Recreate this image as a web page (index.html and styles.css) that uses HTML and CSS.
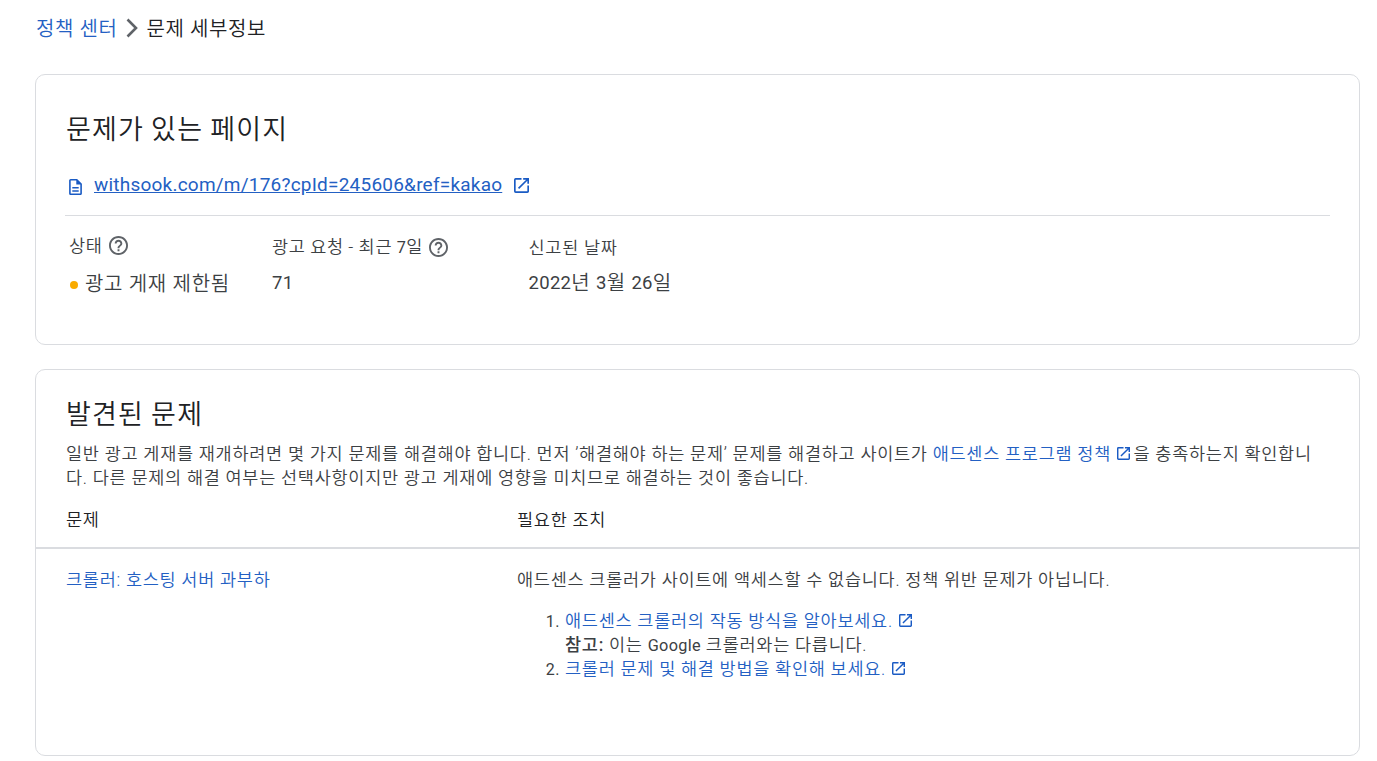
FILE: index.html
```html
<!DOCTYPE html>
<html lang="ko">
<head>
  <meta charset="UTF-8" />
  <meta name="viewport" content="width=device-width, initial-scale=1.0"/>
  <title>문제 세부정보</title>
  <link rel="stylesheet" href="styles.css">
</head>
<body>

  <svg width="0" height="0" class="defs">
    <symbol id="open" viewBox="3 3 18 18">
      <path d="M19 19H5V5h7V3H5a2 2 0 0 0-2 2v14a2 2 0 0 0 2 2h14c1.1 0 2-.9 2-2v-7h-2v7zM14 3v2h3.59l-9.83 9.83 1.41 1.41L19 6.41V10h2V3h-7z"/>
    </symbol>
    <symbol id="help" viewBox="2 2 20 20">
      <path d="M11 18h2v-2h-2v2zm1-16C6.48 2 2 6.48 2 12s4.48 10 10 10 10-4.48 10-10S17.52 2 12 2zm0 18c-4.41 0-8-3.59-8-8s3.59-8 8-8 8 3.59 8 8-3.59 8-8 8zm0-14c-2.21 0-4 1.79-4 4h2c0-1.1.9-2 2-2s2 .9 2 2c0 2-3 1.75-3 5h2c0-2.25 3-2.5 3-5 0-2.21-1.79-4-4-4z"/>
    </symbol>
  </svg>

  <nav class="breadcrumb">
    <a href="#">정책 센터</a>
    <svg class="chevron" viewBox="0 0 12 20"><path d="M1.5 1.5L10 10l-8.500 8.500"/></svg>
    <span>문제 세부정보</span>
  </nav>

  <section class="card page-card">
    <h2>문제가 있는 페이지</h2>
    <div class="page-url">
      <svg class="doc" viewBox="4 2 16 20"><path d="M8 16h8v2H8zm0-4h8v2H8zm6-10H6c-1.100 0-2 .9-2 2v16c0 1.100.89 2 1.990 2H18c1.100 0 2-.9 2-2V8l-6-6zm4 18H6V4h7v5h5v11z"/></svg>
      <a href="#">withsook.com/m/176?cpId=245606&amp;ref=kakao</a>
      <svg class="open"><use href="#open"/></svg>
    </div>
    <div class="stats">
      <div class="stat status">
        <div class="label">상태 <svg class="help"><use href="#help"/></svg></div>
        <div class="value"><span class="dot"></span>광고 게재 제한됨</div>
      </div>
      <div class="stat requests">
        <div class="label"><span>광고 요청 - 최근 <span class="num">7</span>일</span> <svg class="help"><use href="#help"/></svg></div>
        <div class="value"><span class="num">71</span></div>
      </div>
      <div class="stat">
        <div class="label">신고된 날짜</div>
        <div class="value date"><span class="num">2022</span>년 <span class="num">3</span>월 <span class="num">26</span>일</div>
      </div>
    </div>
  </section>

  <section class="card issue-card">
    <h2>발견된 문제</h2>
    <p class="intro">일반 광고 게재를 재개하려면 몇 가지 문제를 해결해야 합니다. 먼저 ’해결해야 하는 문제’ 문제를 해결하고 사이트가 <a href="#">애드센스 프로그램 정책 <svg class="open"><use href="#open"/></svg></a>을 충족하는지 확인합니<br>다. 다른 문제의 해결 여부는 선택사항이지만 광고 게재에 영향을 미치므로 해결하는 것이 좋습니다.</p>
    <div class="row head">
      <div>문제</div>
      <div>필요한 조치</div>
    </div>
    <div class="row">
      <div><a href="#">크롤러: 호스팅 서버 과부하</a></div>
      <div>
        <p>애드센스 크롤러가 사이트에 액세스할 수 없습니다. 정책 위반 문제가 아닙니다.</p>
        <ol>
          <li><a href="#">애드센스 크롤러의 작동 방식을 알아보세요. <svg class="open"><use href="#open"/></svg></a><br><b>참고:</b> 이는 <span class="num">Google</span> 크롤러와는 다릅니다.</li>
          <li><a href="#">크롤러 문제 및 해결 방법을 확인해 보세요. <svg class="open"><use href="#open"/></svg></a></li>
        </ol>
      </div>
    </div>
  </section>

</body>
</html>
```
FILE: styles.css
```css
* {
  box-sizing: border-box;
}

body {
  margin: 0;
  padding: 0 17px 0 35px;
  background: #fff;
  color: #3c4043;
  font-family: Roboto, 'Noto Sans CJK KR', sans-serif;
  font-size: 17.5px;
  font-weight: 350;
  letter-spacing: 0.73px;
  line-height: 24px;
}

a {
  color: #2360c3;
  fill: #1a5bc4;
  text-decoration: none;
}

p, h2, ol {
  margin: 0;
}

.defs {
  display: block;
}

.num {
  font-size: 16.3px;
  font-weight: 400;
  letter-spacing: 0.3px;
}

.breadcrumb {
  display: flex;
  align-items: center;
  height: 74px;
  padding: 0 0 18px 1px;
  color: #202124;
  font-size: 20px;
  letter-spacing: 0.6px;
}

.breadcrumb a, .breadcrumb span {
  padding-top: 1px;
}

.chevron {
  width: 12px;
  height: 20px;
  margin: 0 8px 0 9px;
  fill: none;
  stroke: #5f6368;
  stroke-width: 2.6;
}

.card {
  border: 1px solid #dadce0;
  border-radius: 10px;
}

.card h2 {
  color: #202124;
  font-size: 27px;
  font-weight: 350;
  letter-spacing: 1.2px;
  line-height: 36px;
  word-spacing: -0.8px;
}

.page-card {
  height: 271px;
  padding: 37px 29px 0;
}

.page-card h2 {
  padding-left: 1px;
}

.page-url {
  display: flex;
  align-items: center;
  height: 68px;
  padding: 7px 0 0 4px;
  border-bottom: 1px solid #dadce0;
  font-size: 19px;
  font-weight: 400;
  letter-spacing: 0.22px;
}

.page-url a {
  margin: 0 12px 0 12px;
  text-decoration: underline;
}

.page-url .open {
  width: 15px;
  height: 15px;
  margin: 0;
  fill: #1a5bc4;
}

.doc {
  width: 13px;
  height: 16px;
  margin-top: 4px;
  fill: #1a5bc4;
}

.open {
  width: 13px;
  height: 13px;
  margin: 0 3px 0 1.5px;
  vertical-align: 0;
}

.stats {
  display: grid;
  grid-template-columns: 203px 256.5px 1fr;
  padding: 20px 0 0 4px;
}

.label {
  display: flex;
  align-items: center;
  gap: 6px;
  height: 23px;
}

.requests .label {
  word-spacing: -0.5px;
}

.status .label {
  height: 19px;
}

.help {
  width: 19px;
  height: 19px;
  fill: #5f6368;
}

.value {
  display: flex;
  align-items: center;
  height: 24px;
  margin-top: 12px;
  font-size: 20px;
  letter-spacing: 0.7px;
}

.status .value {
  margin-top: 17px;
}

.value .num {
  font-size: 18.5px;
}

.date {
  white-space: pre;
}

.dot {
  width: 8px;
  height: 8px;
  margin: 2px 7px 0 1px;
  border-radius: 50%;
  background: #f9ab00;
}

.issue-card {
  height: 387px;
  margin-top: 24px;
  padding-top: 27px;
}

.issue-card h2 {
  padding-left: 30px;
}

.intro {
  padding: 9px 0 0 30px;
  white-space: nowrap;
}

.row {
  display: grid;
  grid-template-columns: 451px 1fr;
  padding: 19px 30px 0;
}

.head {
  height: 59px;
  padding-top: 18px;
  border-bottom: 2px solid #dadce0;
  color: #202124;
}

ol {
  padding: 17px 0 0 48px;
}

li {
  height: 48px;
}

li::marker {
  font-size: 16px;
  font-weight: 400;
}

b {
  font-weight: 500;
}
```
